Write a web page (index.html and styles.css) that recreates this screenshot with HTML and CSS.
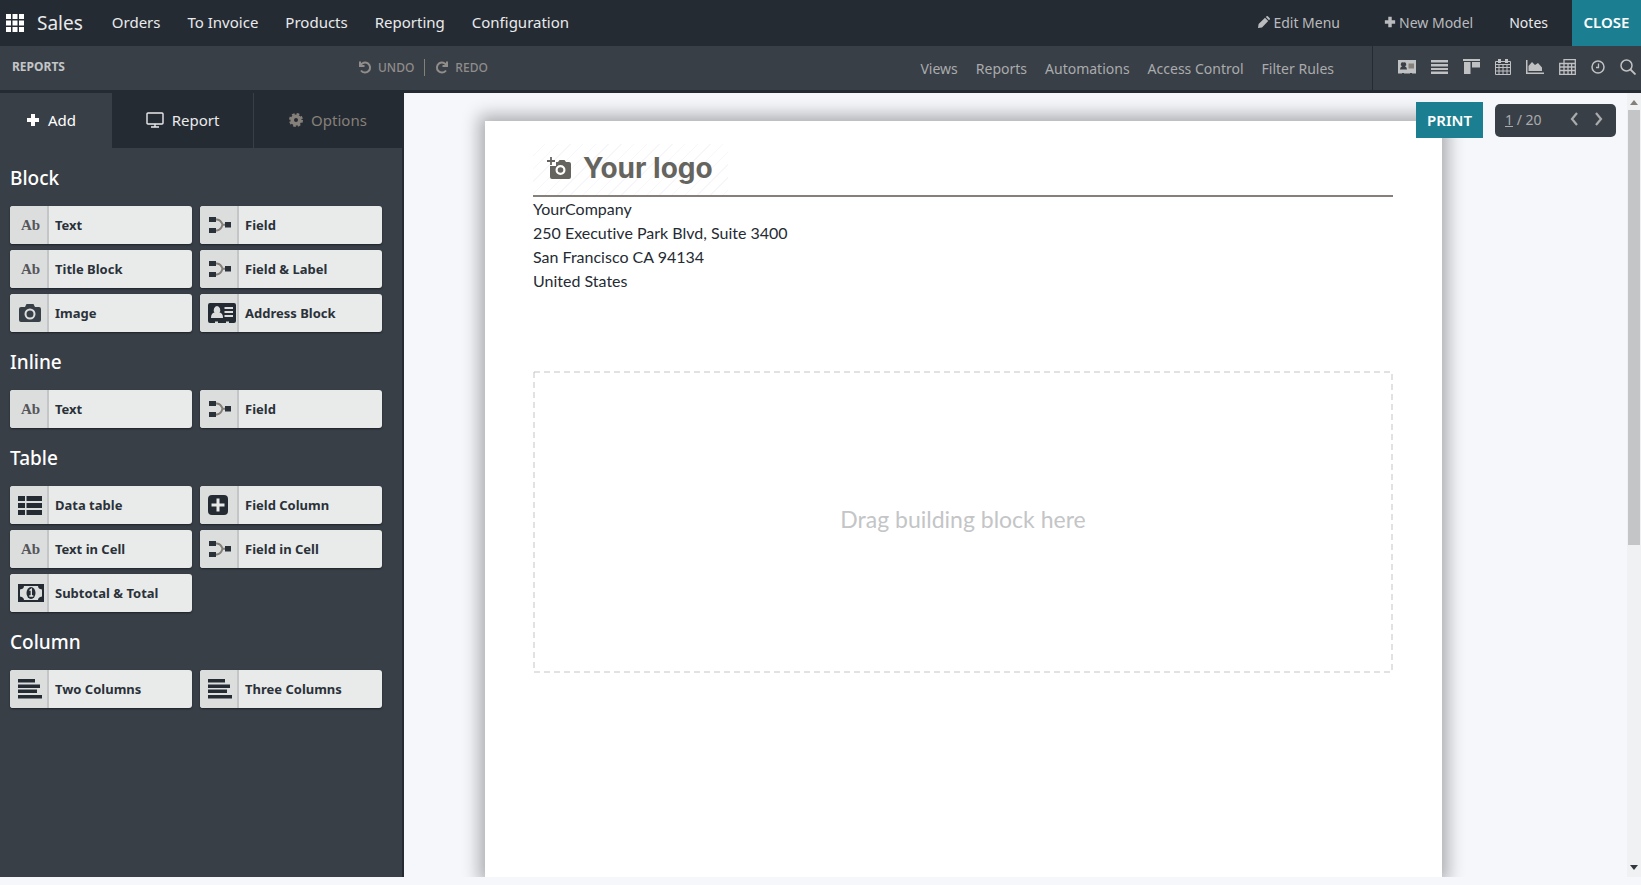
FILE: index.html
```html
<!DOCTYPE html>
<html lang="en">
<head>
<meta charset="utf-8">
<title>Sales - Reports</title>
<link rel="stylesheet" href="styles.css">
</head>
<body>
<svg class="defs" aria-hidden="true">
  <symbol id="i-field" viewBox="0 0 22 18"><path d="M5 3.500h3Q12 4 13.500 8.800Q12 14 8 14.500H5M13 8.800h4" fill="none" stroke="#85807a" stroke-width="2"/><path d="M0 1h7v5H0zM0 12h7v5H0zM16 6h6v5.500h-6z"/></symbol>
  <symbol id="i-plus" viewBox="0 0 14 14"><path d="M5 1h4v4h4v4H9v4H5V9H1V5h4z"/></symbol>
  <symbol id="i-card" viewBox="0 0 28 22"><path fill-rule="evenodd" d="M2 1h24a2 2 0 0 1 2 2v16a2 2 0 0 1-2 2h-5v-1.500h-3V21h-8v-1.500H7V21H2a2 2 0 0 1-2-2V3a2 2 0 0 1 2-2zM9 4A3.500 4 0 0 0 6.500 10.500Q3 11 3 16h12Q15 11 11.500 10.500A3.500 4 0 0 0 9 4zM16.500 5v2H25V5zM16.500 9v2H25V9zM16.500 13v2H25v-2z"/></symbol>
  <symbol id="i-lines" viewBox="0 0 24 20"><path d="M0 0h17v3.500H0zM0 5.500h22V9H0zM0 10.500h19V14H0zM0 16h24v3.500H0z"/></symbol>
</svg>

<header class="topbar">
  <button class="apps" aria-label="Apps"><svg width="18" height="18" viewBox="0 0 18 18"><path d="M0 0h5v5H0zM6.500 0h5v5h-5zM13 0h5v5h-5zM0 6.500h5v5H0zM6.500 6.500h5v5h-5zM13 6.500h5v5h-5zM0 13h5v5H0zM6.500 13h5v5h-5zM13 13h5v5h-5z"/></svg></button>
  <a class="brand" href="#">Sales</a>
  <nav class="menu">
    <a href="#">Orders</a><a href="#">To Invoice</a><a href="#">Products</a><a href="#">Reporting</a><a href="#">Configuration</a>
  </nav>
  <div class="tools">
    <a href="#"><svg width="12" height="12" viewBox="0 0 12 12"><path d="M0 12l.6-4L7 1.800 10.200 5 4 11.400zM7.800 1l.8-.8q.6-.4 1.200 0l2 2q.4.600 0 1.200l-.8.800z"/></svg>Edit Menu</a>
    <a href="#"><svg width="12" height="12"><use href="#i-plus"/></svg>New Model</a>
    <a class="notes" href="#">Notes</a>
  </div>
  <button class="close">CLOSE</button>
</header>

<div class="subbar">
  <h1>REPORTS</h1>
  <div class="history">
    <button><svg width="14" height="14" viewBox="0 0 14 14"><path d="M2 1.500V6h4.500M2.500 5.500A5 5 0 1 1 3 10.500" fill="none" stroke="currentColor" stroke-width="2"/></svg>UNDO</button>
    <button><svg width="14" height="14" viewBox="0 0 14 14"><path d="M12 1.500V6H7.500M11.500 5.500A5 5 0 1 0 11 10.500" fill="none" stroke="currentColor" stroke-width="2"/></svg>REDO</button>
  </div>
  <nav class="links">
    <a href="#">Views</a><a href="#">Reports</a><a href="#">Automations</a><a href="#">Access Control</a><a href="#">Filter Rules</a>
  </nav>
  <div class="views">
    <button aria-label="Form"><svg width="18" height="16" viewBox="0 0 18 16"><path d="M0 1h18v13.500h-4V14h-2v.5H6V14H4v.5H0z"/><path d="M5.500 3.500a2 2 0 0 1 1.500 3.800Q9 8 9 10.500H2Q2 8 4 7.300a2 2 0 0 1 1.500-3.800z" fill="#393f47"/><path d="M10.500 4.500H16v5h-5.500z" fill="#85807a"/></svg></button>
    <button aria-label="List"><svg width="17" height="16" viewBox="0 0 17 16"><path d="M0 1h17v2.500H0zM0 5h17v2.500H0zM0 9h17v2H0zM0 12.500h17V15H0z"/></svg></button>
    <button aria-label="Kanban"><svg width="17" height="16" viewBox="0 0 17 16"><path d="M0 0h17v2H0zM1 3h6.500v12H1zM9 3h8v5.500H9z"/></svg></button>
    <button aria-label="Calendar"><svg width="16" height="16" viewBox="0 0 16 16"><path fill="none" stroke="currentColor" d="M.5 2.500h15v13H.5zM.5 5.500h15M.5 8.500h15M.5 12h15M4 5v10M8 5v10M12 5v10"/><path d="M3 0h3v4H3zM10 0h3v4h-3z"/></svg></button>
    <button aria-label="Graph"><svg width="18" height="16" viewBox="0 0 18 16"><path d="M0 1h1.500v12.500H18V15H0zM2.500 12V7l3.500-4 3 3 3-2 4 4.500V12z"/></svg></button>
    <button aria-label="Pivot"><svg width="17" height="16" viewBox="0 0 17 16"><path fill="none" stroke="currentColor" stroke-width="1.300" d="M5 4V.7h11.300v14.600H.7V4.500h15.600M.7 8h15.600M.7 11.500h15.600M5 4v11M9 4v11M12.600 4v11"/></svg></button>
    <button aria-label="Activity"><svg width="14" height="16" viewBox="0 0 14 16"><circle cx="7" cy="8" r="6" fill="none" stroke="currentColor" stroke-width="1.500"/><path d="M7.500 4.500v4H5" fill="none" stroke="currentColor" stroke-width="1.300"/></svg></button>
    <button aria-label="Search"><svg width="16" height="16" viewBox="0 0 16 16"><circle cx="6.500" cy="6.500" r="5.500" fill="none" stroke="currentColor" stroke-width="1.500"/><path d="M10.500 10.500l5 5" stroke="currentColor" stroke-width="1.800"/></svg></button>
  </div>
</div>

<main class="main">
  <aside class="sidebar">
    <div class="tabs">
      <button class="tab on"><svg width="14" height="14"><use href="#i-plus"/></svg>Add</button>
      <button class="tab report"><svg width="18" height="16" viewBox="0 0 18 16"><path d="M2 1h14q1 0 1 1v9q0 1-1 1H2q-1 0-1-1V2q0-1 1-1zM5 15h8M9 12v3" fill="none" stroke="currentColor" stroke-width="1.400"/></svg>Report</button>
      <button class="tab off"><svg width="14" height="14" viewBox="0 0 14 14"><circle cx="7" cy="7" r="3.800" fill="none" stroke="currentColor" stroke-width="3.600"/><circle cx="7" cy="7" r="6" fill="none" stroke="currentColor" stroke-width="2" stroke-dasharray="2.700 2"/></svg>Options</button>
    </div>
    <div class="blocks">
      <h2>Block</h2>
      <div class="grid">
        <button class="block"><span class="ico ab">Ab</span>Text</button>
        <button class="block"><span class="ico"><svg width="22" height="18"><use href="#i-field"/></svg></span>Field</button>
        <button class="block"><span class="ico ab">Ab</span>Title Block</button>
        <button class="block"><span class="ico"><svg width="22" height="18"><use href="#i-field"/></svg></span>Field &amp; Label</button>
        <button class="block"><span class="ico dim"><svg width="22" height="18" viewBox="0 0 22 18"><path fill-rule="evenodd" d="M2 3h4l1.500-3h7L16 3h4a2 2 0 0 1 2 2v11a2 2 0 0 1-2 2H2a2 2 0 0 1-2-2V5a2 2 0 0 1 2-2zM11 4.500a5.500 5.500 0 1 0 0 11 5.500 5.500 0 0 0 0-11zM11 6.500a3.500 3.500 0 1 1 0 7 3.500 3.500 0 0 1 0-7z"/></svg></span>Image</button>
        <button class="block"><span class="ico wide"><svg width="28" height="22"><use href="#i-card"/></svg></span>Address Block</button>
      </div>
      <h2>Inline</h2>
      <div class="grid">
        <button class="block"><span class="ico ab">Ab</span>Text</button>
        <button class="block"><span class="ico"><svg width="22" height="18"><use href="#i-field"/></svg></span>Field</button>
      </div>
      <h2>Table</h2>
      <div class="grid">
        <button class="block"><span class="ico wide"><svg width="24" height="19" viewBox="0 0 24 19"><path d="M0 0h7v5H0zM8.500 0H24v5H8.500zM0 7h7v5H0zM8.500 7H24v5H8.500zM0 14h7v5H0zM8.500 14H24v5H8.500z"/></svg></span>Data table</button>
        <button class="block"><span class="ico wide"><svg width="20" height="20" viewBox="0 0 20 20"><rect width="20" height="20" rx="4"/><path d="M8.500 3.500h3v5h5v3h-5v5h-3v-5h-5v-3h5z" fill="#e7e9e9"/></svg></span>Field Column</button>
        <button class="block"><span class="ico ab">Ab</span>Text in Cell</button>
        <button class="block"><span class="ico"><svg width="22" height="18"><use href="#i-field"/></svg></span>Field in Cell</button>
        <button class="block"><span class="ico wide"><svg width="26" height="18" viewBox="0 0 26 18"><path fill-rule="evenodd" d="M0 0h26v18H0zM6 2Q6 5 2 5.500v7Q6 13 6 16h14q0-3 4-3.500v-7Q20 5 20 2z"/><ellipse cx="13" cy="9" rx="4.500" ry="6"/><path d="M11.500 6.500l1.800-1.200v6.500M11.300 12h4" stroke="#e7e9e9" stroke-width="1.300" fill="none"/></svg></span>Subtotal &amp; Total</button>
      </div>
      <h2>Column</h2>
      <div class="grid">
        <button class="block"><span class="ico wide"><svg width="24" height="20"><use href="#i-lines"/></svg></span>Two Columns</button>
        <button class="block"><span class="ico wide"><svg width="24" height="20"><use href="#i-lines"/></svg></span>Three Columns</button>
      </div>
    </div>
  </aside>

  <section class="stage">
    <article class="paper">
      <div class="logo">
        <svg width="24" height="22" viewBox="0 0 24 22"><path d="M4 0v8M0 4h8" stroke="currentColor" stroke-width="1.800"/><path fill-rule="evenodd" d="M3 9h6V5h2l1.500-2h5L19 5h3q2 0 2 2v13q0 2-2 2H5q-2 0-2-2zM13.500 8a5 5 0 1 0 0 10 5 5 0 0 0 0-10z"/><circle cx="13.500" cy="13" r="2.800"/></svg>
        Your logo
      </div>
      <address>YourCompany<br>250 Executive Park Blvd, Suite 3400<br>San Francisco CA 94134<br>United States</address>
      <div class="drop">
        <svg class="dash" aria-hidden="true"><rect x="1" y="1"/></svg>
        Drag building block here
      </div>
    </article>
    <div class="float">
      <button class="print">PRINT</button>
      <div class="pager"><span><u>1</u> / 20</span>
        <button aria-label="Previous"><svg width="8" height="14" viewBox="0 0 8 14"><path d="M7 1L2 7l5 6" fill="none" stroke="currentColor" stroke-width="2.200"/></svg></button>
        <button aria-label="Next"><svg width="8" height="14" viewBox="0 0 8 14"><path d="M1 1l5 6-5 6" fill="none" stroke="currentColor" stroke-width="2.200"/></svg></button>
      </div>
    </div>
  </section>
  <div class="scroll" aria-hidden="true">
    <svg width="8" height="5" viewBox="0 0 8 5"><path d="M4 0l4 5H0z" fill="#85807a"/></svg>
    <div class="track"><div class="thumb"></div></div>
    <svg width="8" height="5" viewBox="0 0 8 5"><path d="M0 0h8L4 5z" fill="#33383f"/></svg>
  </div>
</main>
</body>
</html>
```
FILE: styles.css
```css
* { box-sizing: border-box; }
body {
  margin: 0;
  height: 100vh;
  display: flex;
  flex-direction: column;
  background: #f5f7fb;
  color: #e9eaec;
  font-family: "Noto Sans", "Open Sans", sans-serif;
  font-size: 14px;
  overflow: hidden;
}
a { color: inherit; text-decoration: none; }
button {
  padding: 0;
  border: 0;
  background: none;
  color: inherit;
  font: inherit;
  cursor: pointer;
}
svg { display: block; flex: none; fill: currentColor; }
.defs { position: absolute; width: 0; height: 0; }

.topbar {
  flex: none;
  display: flex;
  align-items: center;
  height: 46px;
  padding-left: 6px;
  background: #252b33;
}
.apps { color: #fff; }
.brand { margin-left: 13px; padding-bottom: 1px; font-size: 19px; }
.menu { display: flex; gap: 27px; margin-left: 29px; padding-bottom: 2px; font-size: 15px; }
.tools {
  display: flex;
  gap: 44px;
  margin-left: auto;
  padding-bottom: 2px;
  color: #b9bbbe;
}
.tools a { display: flex; align-items: center; gap: 3px; }
.tools .notes { margin-left: -8px; color: #e9eaec; }
.close {
  align-self: stretch;
  width: 69px;
  margin-left: 24px;
  padding-bottom: 2px;
  background: #1b7f91;
  color: #fff;
  font-size: 15px;
  font-weight: 600;
}

.subbar {
  flex: none;
  display: flex;
  align-items: center;
  height: 47px;
  border-bottom: 3px solid #252b33;
  background: #393f47;
}
.subbar h1 {
  width: 346px;
  margin: 0;
  padding: 0 0 4px 12px;
  font-size: 12px;
  font-weight: 700;
  color: #c3c5c6;
}
.history { display: flex; margin-left: 12px; padding-bottom: 2px; font-size: 12px; font-weight: 500; color: #908d8a; }
.history button { display: flex; align-items: center; gap: 6px; }
.history button + button { margin-left: 10px; padding-left: 10px; border-left: 1px solid #85807a; }
.links { display: flex; gap: 18px; margin-left: auto; font-size: 14px; color: #a9abad; }
.views {
  align-self: stretch;
  display: flex;
  align-items: center;
  gap: 15px;
  margin-left: 38px;
  padding: 0 5px 2px 25px;
  border-left: 1px solid #252b33;
  color: #c0c1c3;
}

.main { flex: 1; min-height: 0; display: flex; margin-bottom: 8px; }
.sidebar {
  flex: none;
  width: 404px;
  border-right: 2px solid #252b33;
  background: #393f47;
}
.tabs { display: flex; height: 55px; background: #252b33; }
.tab {
  display: flex;
  align-items: center;
  justify-content: center;
  gap: 8px;
  width: 112px;
  padding-bottom: 2px;
  font-size: 15px;
}
.on { padding-right: 10px; background: #393f47; color: #fff; }
.report { width: 142px; border-right: 1px solid #393f47; }
.off { flex: 1; color: #85807a; }
.blocks { padding: 0 20px 0 10px; }
h2 {
  height: 58px;
  margin: 0;
  padding-top: 16px;
  font-size: 19px;
  line-height: 28px;
  font-weight: 500;
  color: #fff;
}
.grid { display: grid; grid-template-columns: 1fr 1fr; gap: 6px 8px; }
.block {
  display: flex;
  align-items: center;
  gap: 6px;
  height: 38px;
  border-radius: 3px;
  background: #e9ebeb;
  box-shadow: 0 1px 2px #1d2228;
  color: #2b3139;
  font-size: 13px;
  font-weight: 700;
  overflow: hidden;
}
.ico {
  align-self: stretch;
  display: flex;
  align-items: center;
  flex: none;
  width: 39px;
  padding-left: 9px;
  border-right: 2px solid #c3c5c6;
  background: #dcdede;
}
.wide { padding-left: 8px; color: #252b33; }
.dim { color: #393f47; }
.ab { padding-left: 11px; font: 700 15px "Liberation Serif", serif; color: #55565a; }

.stage { position: relative; flex: 1; min-width: 0; overflow: hidden; padding: 28px 185px 0 81px; }
.paper {
  height: 100%;
  padding: 23px 49px 0 48px;
  background: #fff;
  box-shadow: 0 0 16px 6px rgba(0, 0, 0, .3);
  color: #252b33;
  font: 16px/24px Lato, sans-serif;
  font-variant-ligatures: none;
}
.logo {
  display: flex;
  align-items: center;
  gap: 12px;
  width: 195px;
  height: 51px;
  padding: 0 0 3px 14px;
  background: repeating-linear-gradient(135deg, #fff 0 8px, #f7f7fa 8px 9px);
  color: #66645f;
  font-family: Inter, sans-serif;
  font-size: 28px;
  font-weight: 700;
  white-space: nowrap;
}
address { border-top: 2px solid #85807a; font-style: normal; }
.drop {
  display: flex;
  align-items: center;
  justify-content: center;
  position: relative;
  height: 302px;
  margin-top: 78px;
  padding-bottom: 6px;
  color: #c3c5c6;
  font-size: 23px;
}
.dash { position: absolute; inset: 0; width: 100%; height: 100%; }
.dash rect {
  width: calc(100% - 2px);
  height: calc(100% - 2px);
  fill: none;
  stroke: #c3c5c6;
  stroke-width: 1px;
  stroke-dasharray: 6px 4px;
}
.float { position: absolute; top: 9px; right: 11px; display: flex; align-items: center; gap: 12px; }
.print { width: 67px; height: 36px; background: #1b7f91; color: #fff; font-size: 15px; font-weight: 600; }
.pager {
  display: flex;
  align-items: center;
  width: 121px;
  height: 33px;
  padding: 0 13px 2px 10px;
  border-radius: 5px;
  background: #393f47;
  color: #a9abad;
}
.pager span { margin-right: auto; }
.pager button + button { margin-left: 17px; }
.scroll {
  flex: none;
  display: flex;
  flex-direction: column;
  align-items: center;
  width: 14px;
  padding: 7px 0;
  background: #eff1f3;
}
.track { flex: 1; width: 12px; margin: 5px 0; }
.thumb { height: 58%; background: #c3c5c6; }
```
